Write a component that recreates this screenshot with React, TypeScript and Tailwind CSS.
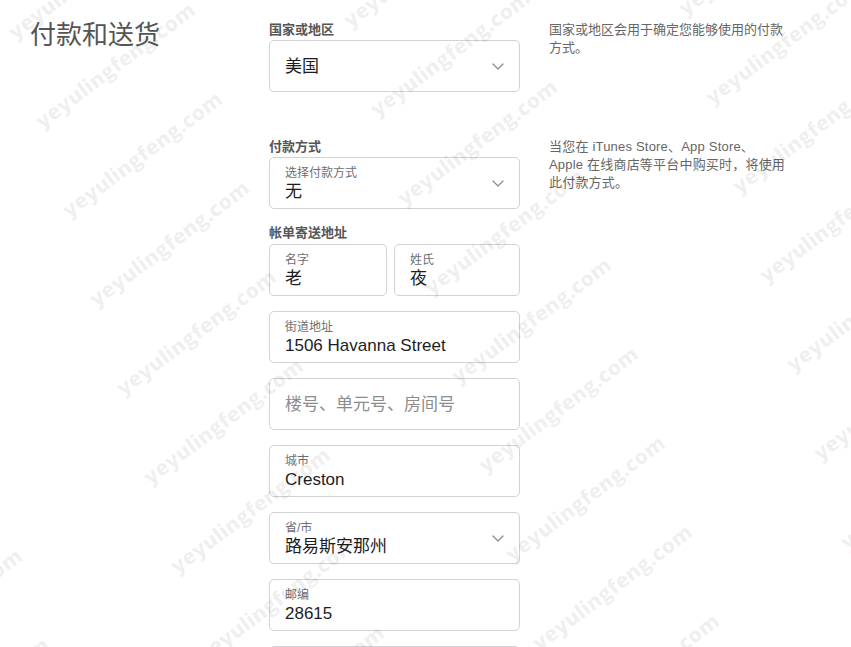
import React from "react";

const FONT = '"Liberation Sans", "Noto Sans CJK SC", sans-serif';

function Chevron() {
  return (
    <svg width="12" height="7" viewBox="0 0 12 7" fill="none" className="shrink-0">
      <path d="M1 1l5 5 5-5" stroke="#8a8a8e" strokeWidth="1.2" strokeLinecap="round" strokeLinejoin="round" />
    </svg>
  );
}

function Box({ label, value, chevron, placeholder, className = "" }: { label?: string; value?: string; chevron?: boolean; placeholder?: string; className?: string }) {
  return (
    <div className={`h-[52px] rounded-[5px] border border-[#d2d2d7] bg-white flex items-center pl-[15px] pr-[15px] ${className}`}>
      <div className="flex-1 min-w-0">
        {placeholder !== undefined ? (
          <div className="text-[17px] leading-[22px] text-[#8c8c8c] mt-[2px]">{placeholder}</div>
        ) : label ? (
          <div className="flex flex-col mt-[2px]">
            <div className="text-[12px] leading-[16px] text-[#6e6e73]">{label}</div>
            <div className="text-[17px] leading-[22px] text-[#1d1d1f]">{value}</div>
          </div>
        ) : (
          <div className="text-[17px] leading-[22px] text-[#1d1d1f] mt-[2px]">{value}</div>
        )}
      </div>
      {chevron && <Chevron />}
    </div>
  );
}

function Label({ children, className = "" }: { children: React.ReactNode; className?: string }) {
  return <div className={`text-[13px] leading-[18px] font-bold text-[#555] ${className}`}>{children}</div>;
}

function Watermarks() {
  const items: { x: number; y: number }[] = [];
  for (let c = -1; c <= 2; c++) {
    for (let r = -2; r <= 8; r++) {
      const x = 115 + 335 * c + 27 * r;
      const y = 65 - 12 * c + 89 * r;
      if (x > -110 && x < 960 && y > -70 && y < 720) items.push({ x, y });
    }
  }
  return (
    <div className="pointer-events-none absolute inset-0 overflow-hidden">
      {items.map((p, i) => (
        <div
          key={i}
          className="absolute w-[240px] h-[30px] -ml-[120px] -mt-[15px] flex items-center justify-center text-[21px] leading-[30px] font-extrabold text-[rgba(0,0,0,0.06)] -rotate-[37deg] whitespace-nowrap"
          style={{ left: p.x, top: p.y, fontFamily: '"Open Sans", sans-serif' }}
        >
          yeyulingfeng.com
        </div>
      ))}
    </div>
  );
}

export default function App() {
  return (
    <div className="relative w-[851px] h-[647px] overflow-hidden bg-white" style={{ fontFamily: FONT }}>
      <div className="flex pl-[30px]">
        <div className="w-[239px] pt-[19px]">
          <h1 className="text-[26px] leading-[32px] text-[#555] font-normal">付款和送货</h1>
        </div>
        <div className="flex flex-col">
          <div className="flex gap-[29px] pt-[21px]">
            <div className="w-[251px] flex flex-col">
              <Label className="mb-[1px]">国家或地区</Label>
              <Box value="美国" chevron />
            </div>
            <p className="w-[245px] text-[13px] leading-[18px] text-[#666]">
              国家或地区会用于确定您能够使用的付款
              <br />
              方式。
            </p>
          </div>
          <div className="flex gap-[29px] mt-[46px]">
            <div className="w-[251px] flex flex-col">
              <Label className="mb-[1px]">付款方式</Label>
              <Box label="选择付款方式" value="无" chevron />
              <Label className="mt-[15px] mb-[2px]">帐单寄送地址</Label>
              <div className="flex gap-[7px]">
                <Box label="名字" value="老" className="w-[118px]" />
                <Box label="姓氏" value="夜" className="flex-1" />
              </div>
              <div className="flex flex-col gap-[15px] mt-[15px]">
                <Box label="街道地址" value="1506 Havanna Street" />
                <Box placeholder="楼号、单元号、房间号" />
                <Box label="城市" value="Creston" />
                <Box label="省/市" value="路易斯安那州" chevron />
                <Box label="邮编" value="28615" />
                <Box placeholder="" />
              </div>
            </div>
            <p className="w-[245px] text-[13px] leading-[18px] text-[#666] tracking-[0.2px]">
              当您在 iTunes Store、App Store、
              <br />
              Apple 在线商店等平台中购买时，将使用
              <br />
              此付款方式。
            </p>
          </div>
        </div>
      </div>
      <Watermarks />
    </div>
  );
}
